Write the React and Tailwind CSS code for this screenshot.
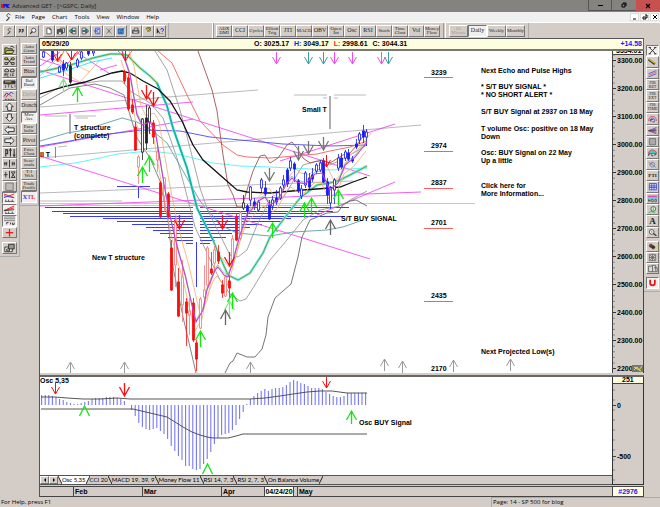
import clsx from "clsx";

const MENUS = ["File", "Page", "Chart", "Tools", "View", "Window", "Help"];

const STUDIES = ["ADX DMI", "CCI", "Cycles", "Elliott Trig", "JTI", "MACD", "OBV", "Open Int", "Osc", "RSI", "Stoch", "Time Clust", "Vol", "Money Flow"];

const OVERLAYS = [
    { lines: ["Auto", "Gann"] },
    { lines: ["Auto", "Trend"] },
    { lines: ["Bias"] },
    { lines: ["Bol", "Band"], on: true },
    { lines: ["Delta"], disabled: true },
    { lines: ["Donch"] },
    { lines: ["Mov", "Ave"], on: true },
    { lines: ["Para-", "bolic"] },
    { lines: ["Pivot"] },
    { lines: ["Price", "Clust"] },
    { lines: ["Seas-", "onals"] },
    { lines: ["T/J", "Web"] },
    { lines: ["Trade", "Profile"] },
];

const TABS = ["Osc 5,35", "CCI 20", "MACD 19, 39, 9", "Money Flow 11", "RSI 14, 7, 3", "RSI 2, 7, 3", "On Balance Volume"];

// Straight trend lines: x1, y1, x2, y2
const MAGENTA_LINES = [
    [40, 115, 193, 102],
    [40, 147, 193, 119],
    [40, 70, 370, 176],
    [40, 156, 370, 259],
    [280, 161, 395, 124],
    [40, 206, 421, 192],
    [317, 215, 395, 182],
    [100, 70, 117, 65],
    [76, 52, 110, 74],
    [40, 66, 60, 52],
    [40, 59, 62, 66],
];

const GRAY_LINES = [
    [40, 107, 258, 90],
    [40, 158, 421, 125],
    [40, 193, 353, 181],
    [45, 116, 67, 116],
    [74, 116, 96, 116],
    [76, 118, 88, 118],
    [58, 147, 67, 146],
    [294, 95, 327, 95],
    [334, 95, 366, 95],
    [323, 98, 327, 98],
    [334, 98, 338, 98],
    [40, 201, 122, 201],
];

// Volume-at-price bars: y, left edge, right edge
const VOLUME_BARS = [
    [207, 45, 349], [211, 52, 333], [213, 63, 322], [216, 70, 345], [218, 103, 291],
    [221, 117, 282], [224, 132, 262], [227, 146, 250], [230, 153, 240], [233, 160, 232],
    [237, 168, 226], [240, 175, 215], [243, 186, 210],
];

const CURVES = [
    { color: "#9a9a9a", points: "155,51 167,70 180,110 190,148 200,188 208,211 220,235 230,255 238,257 247,250 257,225 268,203 283,198 303,165 317,161 330,165 345,158 367,145" },
    { color: "#9a9a9a", points: "40,98 60,87 78,84 100,81 122,81 130,91 150,103 163,118 177,158 188,200 195,227 207,253 220,280 230,294 240,301 246,299 253,288 270,260 287,240 303,220 320,210 340,206 352,199 367,191" },
    { color: "#777777", points: "40,105 70,88 95,84 110,88 124,95 137,138 150,158 160,181 168,220 173,267 183,317 190,347 196,373" },
    { color: "#666666", points: "225,373 230,363 233,361 237,353 247,357 255,357 262,349 266,335 268,317 275,298 291,284 298,257 302,237 310,220 327,213 338,212 343,205 350,201 356,200 367,206" },
    { color: "#5f9ea0", points: "40,141 67,133 85,130 100,125 122,118 137,122 153,131 167,143 187,178 200,201 213,216 220,225 237,233 270,236 293,232 327,230 343,227 363,220" },
    { color: "#4d4de8", points: "40,146 70,141 100,135 143,130 180,131 210,137 240,140 283,144 330,146 367,145" },
    { color: "#55f0f5", points: "40,167 75,163 100,158 117,154 150,151 177,154 213,163 240,166 270,167 330,170 367,168" },
    { color: "#f26060", points: "158,51 172,63 187,95 200,121 223,145 237,155 247,157 270,158 283,157 317,154 330,151 350,147 367,141" },
    { color: "#a05252", points: "198,51 212,90 217,111 223,155 228,185 233,195 237,207 242,207 247,190 253,171 260,156 265,155 270,163 278,158 287,145 292,142 297,148 303,158 310,163 322,160 330,163 343,155 350,153 357,145 367,130" },
];

const ENVELOPE = "40,72 67,66 93,58 110,54 120,54 127,55 140,68 150,76 157,83 167,106 173,128 187,168 197,208 213,240 220,257 228,275 238,280 250,273 263,253 270,237 283,220 300,198 317,185 330,183 340,180 350,175 367,166";
const SLOW_AVERAGE = "40,94 67,86 85,82 100,77 112,73 122,71 130,73 143,81 158,89 170,101 182,121 193,145 203,160 220,175 237,190 247,192 270,193 303,190 330,188 340,187 353,182 367,177";

const FAST_AVERAGE = [
    [122, 51], [130, 75], [137, 115], [142, 125], [150, 122], [155, 130], [160, 160], [165, 190], [172, 225],
    [178, 250], [185, 275], [193, 310], [196, 322], [203, 310], [207, 290], [215, 270], [218, 267], [224, 275],
    [228, 277], [232, 265], [240, 235], [247, 215], [260, 200], [265, 197], [270, 205], [278, 200], [287, 183],
    [292, 178], [297, 182], [305, 184], [315, 174], [322, 173], [330, 190], [338, 183], [345, 165], [355, 157], [367, 142],
];

const shifted = (dx, dy) => FAST_AVERAGE.map(([x, y]) => `${x + dx},${y + dy}`).join(" ");

// x, top, bottom, wick top, wick bottom, colour, filled
const CANDLES = [
    [43, 52, 57, 51, 58, "b", 0], [52, 51, 60, 51, 62, "b", 1], [59, 67, 72, 66, 73, "b", 0], [63, 64, 70, 60, 76, "b", 1],
    [66, 63, 68, 62, 70, "b", 0], [70, 66, 82, 62, 84, "k", 1], [77, 60, 66, 58, 68, "b", 0], [81, 52, 58, 51, 60, "b", 0],
    [88, 51, 54, 51, 56, "b", 1], [93, 51, 53, 51, 56, "b", 0],
    [124, 72, 81, 70, 84, "r", 1], [128, 78, 109, 74, 111, "r", 1], [132, 105, 112, 99, 114, "r", 1], [135, 127, 150, 122, 151, "r", 1],
    [138, 157, 167, 155, 184, "p", 0], [142, 119, 152, 118, 160, "k", 0], [146, 118, 143, 105, 150, "k", 1], [149, 108, 122, 106, 134, "k", 0],
    [153, 123, 137, 120, 144, "r", 1], [157, 152, 160, 145, 172, "p", 0], [160, 183, 217, 181, 218, "r", 1], [164, 178, 196, 177, 212, "p", 0],
    [168, 194, 217, 192, 218, "r", 1], [171, 248, 290, 240, 291, "r", 1], [175, 220, 265, 217, 287, "p", 0], [178, 282, 316, 268, 317, "r", 1],
    [182, 277, 305, 260, 322, "p", 0], [186, 302, 313, 298, 346, "r", 1], [189, 311, 315, 298, 335, "p", 0], [193, 303, 340, 298, 342, "r", 1],
    [196, 343, 359, 340, 371, "r", 1], [200, 299, 328, 297, 329, "p", 0], [204, 290, 297, 265, 305, "p", 0], [207, 248, 285, 246, 288, "p", 0],
    [211, 269, 273, 252, 275, "r", 1], [214, 250, 263, 246, 270, "p", 0], [218, 252, 261, 245, 264, "r", 1], [222, 285, 293, 280, 298, "r", 1],
    [225, 277, 296, 275, 297, "p", 0], [229, 281, 288, 276, 298, "r", 1], [232, 239, 262, 235, 266, "p", 0], [236, 217, 240, 213, 241, "r", 1],
    [240, 213, 238, 211, 240, "p", 0], [243, 203, 208, 195, 210, "k", 0], [247, 206, 211, 204, 217, "b", 1], [250, 187, 200, 186, 206, "b", 0],
    [254, 202, 206, 198, 210, "b", 1], [258, 202, 210, 200, 212, "b", 0], [261, 180, 188, 178, 192, "b", 0], [265, 188, 194, 181, 196, "b", 1],
    [269, 205, 219, 200, 220, "b", 1], [272, 200, 206, 196, 210, "b", 0], [276, 198, 202, 190, 205, "b", 1], [280, 188, 198, 186, 200, "b", 0],
    [283, 180, 185, 175, 188, "b", 0], [287, 170, 184, 168, 187, "b", 1], [290, 161, 168, 157, 171, "b", 0], [294, 164, 169, 162, 182, "b", 1],
    [298, 181, 191, 179, 193, "b", 1], [301, 189, 196, 185, 199, "b", 0], [305, 173, 185, 171, 188, "b", 0], [309, 178, 187, 173, 189, "b", 1],
    [312, 175, 179, 168, 182, "b", 1], [316, 165, 171, 163, 174, "b", 0], [320, 163, 170, 160, 172, "b", 0], [323, 161, 182, 158, 183, "b", 1],
    [327, 182, 195, 178, 204, "b", 1], [330, 188, 203, 186, 209, "b", 0], [334, 180, 190, 178, 204, "b", 0], [338, 158, 168, 154, 171, "b", 0],
    [341, 158, 167, 153, 169, "b", 1], [345, 152, 158, 150, 161, "b", 0], [348, 153, 159, 149, 161, "b", 1], [352, 159, 161, 156, 163, "b", 1],
    [356, 144, 147, 139, 149, "b", 1], [359, 134, 140, 132, 144, "b", 0], [363, 131, 137, 125, 143, "b", 1], [366, 132, 137, 129, 146, "b", 0],
];

const CANDLE_COLORS = { b: "#1a1af0", k: "#222222", r: "#fb0d0d", p: "#f47878" };

// x, tip y, direction (1 points down), colour, shaft length
const ARROWS = [
    [276, 64, 1, "#f04af0", 12], [308, 64, 1, "#3d9c9c", 12], [323, 64, 1, "#3d9c9c", 12], [334, 64, 1, "#f04af0", 12],
    [352, 64, 1, "#f04af0", 12], [381, 64, 1, "#f04af0", 12], [388, 64, 1, "#3d9c9c", 12],
    [57, 61, 1, "#fb0d0d", 12], [71, 60, 1, "#fb0d0d", 12], [125, 61, 1, "#fb0d0d", 12],
    [146, 99, 1, "#fb0d0d", 14], [153, 106, 1, "#fb0d0d", 14], [179, 229, 1, "#fb0d0d", 14], [222, 229, 1, "#fb0d0d", 14],
    [229, 266, 1, "#fb0d0d", 14], [326, 167, 1, "#fb0d0d", 12],
    [269, 181, 1, "#777777", 13], [298, 160, 1, "#777777", 14], [308, 154, 1, "#777777", 13], [323, 150, 1, "#777777", 13],
    [63, 79, -1, "#8adf8a", 13], [77, 87, -1, "#10e810", 15], [142, 167, -1, "#10e810", 16], [149, 156, -1, "#10e810", 16],
    [200, 331, -1, "#10e810", 16], [229, 301, -1, "#7ef07e", 16], [232, 293, -1, "#10e810", 16], [272, 223, -1, "#10e810", 15],
    [304, 203, -1, "#10e810", 15], [311, 198, -1, "#10e810", 15], [338, 190, -1, "#10e810", 15],
    [225, 310, -1, "#666666", 15], [330, 220, -1, "#666666", 15],
    [70, 362, -1, "#999999", 11], [124, 362, -1, "#999999", 11], [250, 362, -1, "#999999", 11], [384, 359, -1, "#999999", 12],
    [402, 361, -1, "#999999", 12], [453, 360, -1, "#999999", 12], [510, 359, -1, "#999999", 12],
];

const LEVELS = [[3239, 75, 77], [2974, 148, 151], [2837, 185, 188], [2701, 225, 228], [2435, 298, 301], [2170, 371, 374]];

const NOTES = [
    [481, 73, "Next Echo and Pulse Highs"],
    [481, 89, "* S/T BUY SIGNAL *"],
    [481, 97, "* NO SHORT ALERT *"],
    [481, 114, "S/T BUY Signal at 2937 on 18 May"],
    [481, 131, "T volume Osc: positive on 18 May"],
    [481, 139, "Down"],
    [481, 155, "Osc: BUY Signal on 22 May"],
    [481, 163, "Up a little"],
    [481, 188, "Click here for"],
    [481, 196, "More Information..."],
    [481, 354, "Next Projected Low(s)"],
    [74, 130, "T structure"],
    [74, 138, "(complete)"],
    [40, 157, "ll T"],
    [302, 112, "Small T"],
    [341, 221, "S/T BUY SIGNAL"],
    [92, 260, "New T structure"],
];

const OSC = [
    10, 10, 10, 9, 8, 6, 5, 3, 2, 1, 1, 2, 3, 4, 6, 7, 7, 7, 8, 8, 8, 7, 6, 4, 0, -5, -11, -18, -22, -24, -25, -24, -23, -26, -29,
    -34, -41, -46, -51, -55, -61, -61, -64, -65, -64, -59, -54, -47, -39, -33, -30, -29, -28, -25, -20, -14, -7, 1, 6, 9, 12, 14,
    16, 14, 16, 17, 17, 18, 20, 23, 25, 24, 22, 21, 19, 17, 17, 17, 16, 13, 11, 9, 8, 8, 9, 12, 12, 12, 12, 12, 12,
];

const OSC_ARROWS = [
    [55, 394, 1, "#fb0d0d", 12], [124, 396, 1, "#fb0d0d", 13], [326, 388, 1, "#fb0d0d", 12],
    [84, 406, -1, "#10e810", 0], [207, 464, -1, "#10e810", 0], [351, 411, -1, "#10e810", 13],
];

function Arrow({ x, y, dir, color, len }) {
    const back = y - dir * (len === 0 ? 10 : len > 12 ? 9 : 7);
    const wing = len > 12 || len === 0 ? 5 : 4;
    return (
        <path
            d={`M${x - wing} ${back}L${x} ${y}L${x + wing} ${back}M${x} ${y}V${y - dir * len}`}
            stroke={color}
            strokeWidth={len > 12 || len === 0 ? 1.3 : 1}
            fill="none"
        />
    );
}

function PricePlot() {
    return (
        <svg viewBox="40 51 572 322" className="block h-auto min-w-0 flex-1 bg-white font-['Liberation_Sans',sans-serif] text-[7px] font-bold">
            <path d="M40 203.500H475M40 205.500H330" stroke="#c8c8c8" />
            {GRAY_LINES.map((l, i) => (
                <line key={i} x1={l[0]} y1={l[1]} x2={l[2]} y2={l[3]} stroke="#a8a8a8" strokeWidth="0.8" />
            ))}
            {VOLUME_BARS.map(([y, a, b]) => (
                <path key={y} d={`M${a} ${y + 0.5}H193M200 ${y + 0.5}H${b}`} stroke="#3a3aee" />
            ))}
            <path d="M117 186.500H150M138.500 187V198M196.500 242V287" stroke="#3a3aee" />
            {MAGENTA_LINES.map((l, i) => (
                <line key={i} x1={l[0]} y1={l[1]} x2={l[2]} y2={l[3]} stroke="#f24cf2" strokeWidth="0.9" />
            ))}
            {CURVES.map((c, i) => (
                <polyline key={i} points={c.points} stroke={c.color} strokeWidth="0.9" fill="none" />
            ))}
            <path d="M44 51L58 62L64 51M66 51L72 60L80 51M52 51L66 66L78 51M118 51L126 58L132 51" stroke="#f54040" fill="none" strokeWidth="0.8" />
            <path d="M40 76L58 58L66 74L80 82L100 60M78 66L90 72" stroke="#f5b070" fill="none" strokeWidth="0.8" />
            <path d="M40 78L68 70L92 62L112 58" stroke="#45e6ee" fill="none" />
            <polyline points={ENVELOPE} stroke="#6cf0ee" strokeWidth="2.6" fill="none" />
            <polyline points={ENVELOPE} stroke="#7a9a2a" strokeWidth="1" fill="none" />
            <path d="M157 83L167 106L173 128L187 168L197 208L213 240" stroke="#18b0a8" strokeWidth="1.5" fill="none" />
            <polyline points={SLOW_AVERAGE} stroke="#111111" strokeWidth="1.3" fill="none" />
            <polyline points={shifted(4, -9)} stroke="#f5ac6c" strokeWidth="0.8" fill="none" />
            <polyline points={shifted(-1, 9)} stroke="#f5ac6c" strokeWidth="0.8" fill="none" />
            <polyline points={shifted(0, -2)} stroke="#7bd07b" strokeWidth="0.8" fill="none" />
            {CANDLES.map(([x, top, bottom, hi, lo, c, filled]) => (
                <g key={x} stroke={CANDLE_COLORS[c]} strokeWidth="0.8">
                    <line x1={x + 0.5} x2={x + 0.5} y1={hi} y2={lo} />
                    <rect
                        x={x - 0.5}
                        y={top}
                        width={2}
                        height={bottom - top}
                        fill={filled ? CANDLE_COLORS[c] : "#ffffff"}
                    />
                </g>
            ))}
            <polyline points={shifted(0, 0)} stroke="#c33fd6" strokeWidth="1.1" fill="none" />
            {ARROWS.map(([x, y, dir, color, len], i) => (
                <Arrow key={i} x={x + 0.5} y={y} dir={dir} color={color} len={len} />
            ))}
            <path d="M70 114V134M330 96V129" stroke="#999999" strokeWidth="1.6" />
            <path d="M55.500 147V158" stroke="#888888" />
            {LEVELS.map(([price, y, rule]) => (
                <g key={price}>
                    <text x="431" y={y}>{price}</text>
                    <line x1="424" x2="453" y1={rule + 0.5} y2={rule + 0.5} stroke="#f56060" />
                </g>
            ))}
            {NOTES.map(([x, y, text]) => (
                <text key={text} x={x} y={y}>{text}</text>
            ))}
        </svg>
    );
}

function PriceScale() {
    const labels = Array.from({ length: 12 }, (_, i) => 3300 - i * 100);
    const ticks = Array.from({ length: 57 }, (_, i) => 55 + i * 5.6);
    return (
        <svg viewBox="613 51 30 322" className="block w-[32px] shrink-0 border-x border-[#444] bg-[#d4cdc7] font-['Liberation_Sans',sans-serif] text-[7px] font-bold">
            <rect x="613" y="51" width="30" height="3" fill="#fdfbe0" />
            <text x="616" y="53">3354.01</text>
            <path d="M613 54.500H643" stroke="#444444" />
            {ticks.map((y) => (
                <line key={y} x1="613" x2="615" y1={y} y2={y} stroke="#666666" strokeWidth="0.7" />
            ))}
            {labels.map((n, i) => (
                <g key={n}>
                    <line x1="613" x2="616" y1={60.5 + i * 28} y2={60.5 + i * 28} stroke="#333333" />
                    <text x="617" y={63 + i * 28}>{n}.00</text>
                </g>
            ))}
            <rect x="632" y="365" width="11" height="7" fill="#77776a" />
            <path d="M634 370L637 367L639 370L642 366M634 367L641 371" stroke="#e6e04a" fill="none" />
        </svg>
    );
}

function OscPlot() {
    return (
        <svg viewBox="40 377 572 98" className="block h-auto w-full bg-white font-['Liberation_Sans',sans-serif] text-[7px] font-bold">
            <text x="40" y="383">Osc 5,35</text>
            {OSC.map((v, i) => (
                <line key={i} x1={41.6 + i * 3.6} x2={41.6 + i * 3.6} y1="405" y2={405 - v} stroke="#7777f5" strokeWidth="1.1" />
            ))}
            <polyline points="41,397 55,397 67,398 83,399 100,399 117,398 130,399 250,399 265,398 280,396 293,394 307,392 320,391 332,391 347,393 367,393" stroke="#444444" strokeWidth="0.9" fill="none" />
            <polyline points="41,409 133,409 150,413 167,417 183,427 192,432 200,435 207,437 213,438 228,438 236,436 243,434 367,434" stroke="#444444" strokeWidth="0.9" fill="none" />
            {OSC_ARROWS.map(([x, y, dir, color, len], i) => (
                <Arrow key={i} x={x + 0.5} y={y} dir={dir} color={color} len={len} />
            ))}
            <text x="359" y="425">Osc BUY Signal</text>
        </svg>
    );
}

function OscScale() {
    const ticks = Array.from({ length: 10 }, (_, i) => 390 + i * 10);
    return (
        <svg viewBox="613 377 30 107" className="block w-[32px] shrink-0 border-x border-b border-[#333] bg-[#d4cdc7] font-['Liberation_Sans',sans-serif] text-[7px] font-bold">
            <rect x="613" y="377" width="30" height="6" fill="#fdfbe0" />
            <text x="622" y="382">251</text>
            <path d="M613 383.500H643M613 405.500H616M613 456.500H616" stroke="#444444" />
            {ticks.map((y) => (
                <line key={y} x1="613" x2="615" y1={y} y2={y} stroke="#666666" strokeWidth="0.7" />
            ))}
            <text x="617" y="408">0</text>
            <text x="617" y="459">-500</text>
        </svg>
    );
}

// Glyphs share a 14 x 10 drawing area
const GLYPHS = {
    squiggle: <path d="M8 1C5 2 5 4 7 5S8 8 5 9M8 1L10 3M5 9L8 7M9 5L7 7" />,
    quotes: <path d="M4 3h2v2L4 7M8 3h2v2L8 7" strokeWidth="1.6" />,
    lens: <g><circle cx="8" cy="4" r="3" fill="#eef" /><path d="M6 6L3 9" strokeWidth="1.6" /></g>,
    page: <path d="M4 1h4l2 2v6H4zM8 1v2h2" fill="#fff" />,
    save: <g><path d="M2 3h7v6H2z" fill="#555" /><path d="M6 1h6v6H9V3H6z" fill="#ddd" /><path d="M4 7h3v2H4z" fill="#fff" stroke="none" /></g>,
    pageLeft: <g><path d="M6 1h5v8H6z" fill="#fff" /><path d="M2 5l3-3v2h5v2H5v2z" fill="#19c5cc" /></g>,
    pageRight: <g><path d="M3 1h5v8H3z" fill="#fff" /><path d="M12 5L9 2v2H4v2h5v2z" fill="#19c5cc" /></g>,
    pageBlue: <g stroke="#3344dd"><path d="M5 1h6v8H5z" fill="#cde" /><path d="M3 4h5M3 6h5M7 3h3M7 8h3" /></g>,
    cross: <path d="M3 1L11 9M11 1L3 9M5 5h4M7 2v6" stroke="#777" />,
    pageTeal: <g><path d="M3 2h7v7H3z" fill="#2aa8b8" stroke="#2233aa" /><path d="M6 5L12 1M5 7h3" stroke="#2233dd" /></g>,
    printer: <g><path d="M4 4L5 1h5l-1 3" fill="#fff" /><path d="M2 4h9v4H2z" fill="#888" /><path d="M4 7h5" stroke="#fff" /></g>,
    help: <g><path d="M5 3C5 0 10 0 10 3C10 5 7 4 7 6" stroke="#333" strokeWidth="2.400" /><path d="M5 3C5 0 10 0 10 3C10 5 7 4 7 6M7 8v1" stroke="#eadf00" strokeWidth="1.300" /></g>,
    whatsThis: <g><path d="M3 1v7l2-2 2 3" fill="#111" /><path d="M8 3C8 1 12 1 12 3S10 5 10 6M10 8v1" stroke="#2222cc" strokeWidth="1.400" /></g>,
    folder: <g><path d="M2 3h3l1 1h4v5H2z" fill="#a9a92c" /><path d="M4 6h8l-2 3H2z" fill="#e4df5a" /><path d="M8 2l2-1 2 2" /></g>,
    network: <g><path d="M2 2h3v2H2zM9 2h3v2H9zM2 7h3v2H2zM9 7h3v2H9z" fill="#e4df5a" /><path d="M5 3l4 5M9 3L5 8" /></g>,
    reset: <g><path d="M2 2l2-1 2 1v2H2zM8 2l2-1 2 1v2H8z" /><path d="M2 9V6h2v1H2l2 2M6 6H5v3h1M8 6v3M10 9V6h2M10 8h2" strokeWidth="0.7" /></g>,
    study: <g><path d="M1 2h12v3H1z" fill="#333" /><path d="M2 3h7" stroke="#e4df5a" /><path d="M2 7h1v2H2M5 6h2M6 6v3M9 6v3h2M13 6v3" strokeWidth="0.7" /></g>,
    elliott: <g><path d="M1 6l3-4 2 2 3-3 2 2" stroke="#2233ee" /><path d="M3 7l3-4 3 3" stroke="#ee2222" /><path d="M2 9h10" strokeDasharray="2 1" /></g>,
    up: <path d="M7 1L11 5H9V9H5V5H3z" fill="#eee" />,
    down: <path d="M7 9L11 5H9V1H5V5H3z" fill="#eee" />,
    left: <path d="M2 5L6 1V3H12V7H6V9z" fill="#eee" />,
    right: <path d="M12 5L8 1V3H2V7H8V9z" fill="#eee" />,
    barsIn: <path d="M3 1v8M3 2h2v4H3M8 1v8M12 1v8M7 3l1-2 1 2M11 7l1 2 1-2" strokeWidth="1.200" />,
    barsOut: <path d="M7 1v8M1 5h3M2 3v4M4 3v4M10 3v4M12 3v4M10 5h3" />,
    barsFit: <path d="M7 1v8M3 2v6M1 5h4M9 2h4L9 8h4z" />,
    box: <path d="M3 1h8v8H3z" fill="#bbb" stroke="#777" />,
    lines: <g><path d="M1 1l11 4M1 5L12 1" stroke="#ee2222" /><path d="M1 3l11 2" stroke="#4444ee" /><path d="M2 9h10M3 7v2M6 7v2M10 7v2" strokeWidth="0.8" /></g>,
    gann: <g><path d="M1 6L12 1M1 6L12 3" stroke="#ee2222" /><path d="M1 6L12 5" stroke="#333" /><path d="M2 9h10M3 7v2M6 7v2M10 7v2" strokeWidth="0.8" /></g>,
    fib: <g><path d="M1 1h12M1 3h12M1 5h12" stroke="#777" /><path d="M4 9V7h2M8 7v2M10 7v2h2v-2" /></g>,
    plus: <path d="M7 1v8M3 5h8" stroke="#f01818" strokeWidth="1.300" />,
    props: <g><path d="M2 4h8v5H2z" fill="#fff" /><path d="M6 1h6v5H6z" fill="#9a9a88" /><path d="M4 6h3v2H4z" /></g>,
    scaleX: <path d="M3 1L11 9M11 1L3 9M2 1h3M9 1h3M2 9h3M9 9h3" strokeWidth="1.200" />,
    pencil: <g><path d="M2 2L10 8" stroke="#333" strokeWidth="3" /><path d="M3 2L10 7" stroke="#d9ce20" strokeWidth="1.700" /></g>,
    channel: <g><path d="M2 5L12 1M2 9L12 5" stroke="#4444ee" /><path d="M2 7L12 3" stroke="#ee5555" /></g>,
    arcs: <g><path d="M2 8C2 0 12 0 12 8" stroke="#ee3355" /><path d="M4 8C4 3 10 3 10 8" stroke="#4444ee" /><path d="M5 9V6h3M7 9h3" /></g>,
    fan: <g><path d="M12 1L2 5L12 9" stroke="#4444ee" /><path d="M12 3L2 5L12 7" stroke="#ee3366" strokeWidth="1.400" /><path d="M2 5h10" /></g>,
    square: <path d="M3 1h8v8H3z" fill="#aaa" stroke="#666" />,
    ellipse: <g><path d="M2 6C2 0 12 0 12 6z" fill="#32d4d8" stroke="#dd3333" /><path d="M2 9V7h2M6 7v2h2M10 9V7h2" /></g>,
    search2: <g><path d="M2 2l8 5M3 5l5-3" stroke="#777" /><circle cx="7" cy="5" r="3" stroke="#7777cc" /><path d="M9 7l3 2" stroke="#55aa99" /></g>,
    gridBlue: <path d="M3 1h9v8H3zM3 4h9M3 6h9M6 1v8M9 1v8" stroke="#3344ee" fill="#dde" />,
    mob: <g><path d="M1 1h12v2H1z" fill="#ee44cc" stroke="none" /><path d="M1 3h12v2H1z" fill="#30d8dc" stroke="none" /><path d="M2 9V6l1 2 1-2v3M6 6h2v3H6zM10 6v3h2V6z" strokeWidth="0.8" /></g>,
    loopGreen: <g><circle cx="8" cy="4" r="3" stroke="#444" fill="#dfd" /><path d="M8 2v4M2 9c2-2 5-2 8 0" stroke="#22aa33" /></g>,
    zoom: <g><circle cx="6" cy="4" r="3" fill="#fff" /><path d="M8 6l4 3" strokeWidth="1.500" /><path d="M5 4h2" /></g>,
    palette: <g><circle cx="5" cy="4" r="2" fill="#c22" /><circle cx="8" cy="6" r="2" fill="#333" /><circle cx="11" cy="8" r="1" fill="#eadf00" stroke="#eadf00" /></g>,
    tiles: <path d="M3 1h8v8H3zM4 2l6 6M10 2L4 8M7 1v8M3 5h8" stroke="#666" />,
    copies: <path d="M2 2h5v7H2zM6 1h5v7M9 4h4v5H7" stroke="#555" fill="#ddd" />,
    magnet: <path d="M4 1v4C4 9 10 9 10 5V1" stroke="#e81414" strokeWidth="2.200" />,
};

function Glyph({ name }) {
    return (
        <svg viewBox="0 0 14 10" className="h-full max-h-[10px] w-full" fill="none" stroke="#333333" strokeWidth="1">
            {GLYPHS[name]}
        </svg>
    );
}

const TEXT_SIZES = {
    tiny: "text-[4px] leading-[4px]",
    small: "text-[5px] leading-[4px]",
    normal: "text-[6px] leading-[5px]",
    large: "text-[9px] leading-[9px] font-bold",
};

function ToolButton({ label, on, disabled, size = "normal", className, children }) {
    return (
        <button
            type="button"
            aria-label={label}
            disabled={disabled}
            className={clsx(
                "flex items-center justify-center border font-['Liberation_Serif',serif] text-[#222] disabled:text-[#a39d98]",
                TEXT_SIZES[size],
                on ? "border-t-[#777] border-r-white border-b-white border-l-[#777] bg-[#f1efed]" : "border-t-white border-r-[#777] border-b-[#777] border-l-white bg-[#d4cdc7]",
                className
            )}
        >
            {children}
        </button>
    );
}

function IconGroup({ names }) {
    return (
        <div className="flex">
            {names.map((n) => (
                <ToolButton key={n} label={n} className="h-[12px] w-[12px]">
                    <Glyph name={n} />
                </ToolButton>
            ))}
        </div>
    );
}

function TitleBar() {
    return (
        <header className="flex h-[12px] items-stretch bg-[#858380] text-[6px] leading-[12px] text-[#1c1c1c]">
            <svg viewBox="0 0 10 10" className="mt-px ml-px h-[10px] w-[10px]">
                <path d="M0 3H4V7H0z" fill="#e01818" />
                <path d="M2 3H9L7 5L9 7H6L4 5L3 7z" fill="#1c1cd8" />
            </svg>
            <h1 className="ml-px flex-1">Advanced GET - [^GSPC, Daily]</h1>
            <button type="button" aria-label="Minimize" className="flex h-[11px] w-[24px] items-center justify-center border border-t-0 border-[#555]">
                <span className="mt-px h-px w-[5px] bg-black"></span>
            </button>
            <button type="button" aria-label="Restore" className="flex h-[11px] w-[24px] items-center justify-center border-b border-[#555]">
                <svg viewBox="0 0 6 6" className="h-[6px] w-[6px]" fill="none" stroke="#000"><path d="M1 2h3v3H1zM2 1h3v3" /></svg>
            </button>
            <button type="button" aria-label="Close" className="flex h-[11px] w-[24px] items-center justify-center bg-[#c7514e]">
                <svg viewBox="0 0 6 6" className="h-[6px] w-[6px]" stroke="#000"><path d="M1 1L5 5M5 1L1 5" strokeWidth="1.200" /></svg>
            </button>
        </header>
    );
}

function MenuBar() {
    return (
        <nav className="flex h-[10px] items-center bg-[#f0f0f0] text-[6px] leading-[10px]">
            <div className="mr-[1px] ml-[2px] h-[10px] w-[12px]">
                <Glyph name="squiggle" />
            </div>
            <div className="flex flex-1 gap-[7px]">
                {MENUS.map((m) => (
                    <button key={m} type="button">{m}</button>
                ))}
            </div>
            <div className="flex gap-px pr-px">
                {["M1 5h3", "M1 3h3v2H1zM3 1h2v3", "M1 1L5 5M5 1L1 5"].map((d, i) => (
                    <button key={d} type="button" aria-label={["Minimize chart", "Restore chart", "Close chart"][i]} className="flex h-[8px] w-[9px] items-center justify-center border border-[#ddd] bg-white">
                        <svg viewBox="0 0 6 6" className="h-[6px] w-[6px]" fill="none" stroke="#000"><path d={d} /></svg>
                    </button>
                ))}
            </div>
        </nav>
    );
}

function TopToolbar() {
    return (
        <div className="flex h-[16px] items-center border-t border-white pl-[3px]">
            <IconGroup names={["squiggle", "quotes", "lens"]} />
            <div className="ml-[4px]">
                <IconGroup names={["page", "save", "pageLeft", "pageRight", "pageBlue", "cross", "pageTeal"]} />
            </div>
            <div className="ml-[3px]">
                <IconGroup names={["printer", "help", "whatsThis"]} />
            </div>
            <div className="ml-[2px] h-full w-[44px] border-l border-[#aaa]"></div>
            <div className="mr-[2px] h-full w-[2px] border-x border-white border-r-[#999]"></div>
            <div className="flex">
                {STUDIES.map((s) => (
                    <ToolButton key={s} size={s.length > 3 ? "small" : "normal"} className="h-[12px] w-[16px]">
                        {s}
                    </ToolButton>
                ))}
            </div>
            <div className="mx-[3px] h-full w-[3px] border-x border-white border-l-[#999]"></div>
            <div className="flex">
                <ToolButton disabled size="small" className="h-[12px] w-[19px]">60 Minute</ToolButton>
                <ToolButton on className="h-[12px] w-[19px]">Daily</ToolButton>
                <ToolButton size="small" className="h-[12px] w-[19px]">Weekly</ToolButton>
                <ToolButton size="small" className="h-[12px] w-[19px]">Monthly</ToolButton>
            </div>
            <div className="ml-[3px] h-full border-l border-[#aaa]"></div>
        </div>
    );
}

function LeftToolbars() {
    const tools = ["folder", "network", "reset", "study", "elliott", "up", "down", "left", "right", "barsIn", "barsOut", "barsFit", "box", "lines", "gann", "fib", "plus"];
    return (
        <aside className="flex w-[39px] shrink-0 items-start">
            <div className="w-[20px] border-r border-b border-[#aaa] px-[2px] pt-[6px] pb-[2px]">
                <div className="flex h-[194px] flex-col">
                    {tools.map((t) => (
                        <ToolButton key={t} label={t} on={["lines", "gann", "fib"].includes(t)} className="min-h-0 w-full flex-1">
                            <Glyph name={t} />
                        </ToolButton>
                    ))}
                </div>
                <ToolButton label="props" className="mt-[4px] h-[12px] w-full">
                    <Glyph name="props" />
                </ToolButton>
            </div>
            <div className="w-[19px] border-r border-b border-[#aaa] px-px pt-[5px] pb-[2px]">
                <div className="flex h-[160px] flex-col">
                    {OVERLAYS.map(({ lines, on, disabled }) => (
                        <ToolButton key={lines.join("")} on={on} disabled={disabled} size={lines.length > 1 ? "small" : "normal"} className="min-h-0 w-full flex-1 flex-col">
                            {lines.map((l) => <span key={l}>{l}</span>)}
                        </ToolButton>
                    ))}
                    <ToolButton on className="min-h-0 w-full flex-1 font-bold">
                        <span className="text-[#2222ee]">X</span>
                        <span className="text-[#dd22dd]">T</span>
                        <span className="text-[#ee2222]">L</span>
                    </ToolButton>
                </div>
            </div>
        </aside>
    );
}

const RIGHT_SIZES = { "FIB RET": "tiny", "FIB EXT": "tiny", "FIB TIME": "tiny", PTI: "small", A: "large" };

function RightToolbar() {
    const tools = ["scaleX", "pencil", "channel", "FIB RET", "FIB EXT", "FIB TIME", "arcs", "fan", "square", "ellipse", "search2", "PTI", "gridBlue", "mob", "loopGreen", "A", "zoom"];
    return (
        <aside className="w-[16px] shrink-0">
            <div className="border-b border-[#aaa] pt-[7px] pr-px pb-[2px] pl-[2px]">
                <div className="flex h-[193px] flex-col">
                    {tools.map((t) => (
                        <ToolButton key={t} label={t} on={t === "scaleX"} size={RIGHT_SIZES[t]} className={clsx("min-h-0 w-full flex-1", t === "PTI" && "font-bold")}>
                            {GLYPHS[t] ? <Glyph name={t} /> : t}
                        </ToolButton>
                    ))}
                </div>
                <div className="mt-[3px] flex flex-col">
                    {["palette", "tiles", "copies"].map((t) => (
                        <ToolButton key={t} label={t} className="h-[11px] w-full">
                            <Glyph name={t} />
                        </ToolButton>
                    ))}
                </div>
                <ToolButton label="magnet" on className="mt-[3px] h-[12px] w-full">
                    <Glyph name="magnet" />
                </ToolButton>
            </div>
        </aside>
    );
}

function QuoteBar() {
    return (
        <div className="flex h-[10px] items-center border-r border-[#666] bg-[#fdfde0] pr-px pl-[2px] text-[7px] leading-[10px] font-bold">
            <span className="w-[212px]">05/29/20</span>
            <div className="flex flex-1 gap-[5px]">
                <span>O: 3025.17</span>
                <span><span className="text-[#2020ee]">H:</span> 3049.17</span>
                <span><span className="text-[#ee2020]">L:</span> 2998.61</span>
                <span>C: 3044.31</span>
            </div>
            <span className="text-[#2020ee]">+14.58</span>
        </div>
    );
}

function StudyTabs() {
    return (
        <div role="tablist" className="flex h-[10px] items-stretch border-y border-[#555] font-['Lato',sans-serif] text-[6px] leading-[8px]">
            <ToolButton label="Previous" className="w-[9px]">
                <svg viewBox="0 0 4 4" className="h-[4px] w-[4px]"><path d="M3 0V4L1 2z" /></svg>
            </ToolButton>
            <ToolButton label="Next" className="w-[9px]">
                <svg viewBox="0 0 4 4" className="h-[4px] w-[4px]"><path d="M1 0V4L3 2z" /></svg>
            </ToolButton>
            {TABS.map((t, i) => (
                <div key={t} className="flex">
                    <svg viewBox="0 0 4 8" className="h-[8px] w-[4px]">
                        {i < 2 && <path d={i === 0 ? "M0 0H4V8z" : "M0 0H4L0 8z"} fill="#fff" />}
                        <path d={i === 1 ? "M4 0L0 8" : "M0 0L4 8"} stroke="#222" />
                    </svg>
                    <button type="button" role="tab" aria-selected={i === 0} className={clsx("whitespace-nowrap", i === 0 && "bg-white")}>{t}</button>
                </div>
            ))}
            <svg viewBox="0 0 4 8" className="h-[8px] w-[4px]"><path d="M4 0L0 8" stroke="#222" /></svg>
        </div>
    );
}

function DateStrip() {
    return (
        <div className="mt-px flex h-[11px] text-[7px] leading-[9px] font-bold">
            <div className="flex min-w-0 flex-1 border-y border-[#444] pl-[33px]">
                <span className="w-[69px] border-l border-[#444] pl-px">Feb</span>
                <span className="w-[79px] border-l border-[#444] pl-px">Mar</span>
                <span className="w-[43px] border-l border-[#444] pl-px">Apr</span>
                <time className="w-[30px] border-x border-[#444] bg-[#fdfde0] text-center">04/24/20</time>
                <span className="ml-[3px] border-l border-[#444] pl-px">May</span>
            </div>
            <span className="w-[32px] border border-[#444] bg-[#fdfde0] text-center text-[#2020ee]">#2976</span>
        </div>
    );
}

export default function App() {
    return (
        <div className="flex min-h-screen flex-col bg-[#d4cdc7] font-['Open_Sans',sans-serif] text-black">
            <TitleBar />
            <MenuBar />
            <TopToolbar />
            <div className="flex flex-1">
                <LeftToolbars />
                <main className="min-w-0 flex-1 border-t border-l border-[#555] font-['Liberation_Sans',sans-serif]">
                    <QuoteBar />
                    <section className="flex border-t-2 border-[#777770]">
                        <PricePlot />
                        <PriceScale />
                    </section>
                    <section className="mt-[2px] flex border-t-2 border-[#666]">
                        <div className="min-w-0 flex-1">
                            <OscPlot />
                            <StudyTabs />
                        </div>
                        <OscScale />
                    </section>
                    <DateStrip />
                </main>
                <RightToolbar />
            </div>
            <footer className="flex h-[10px] items-center text-[6px] leading-[10px]">
                <span className="flex-1 pl-px">For Help, press F1</span>
                <span className="w-[169px] border-t border-l border-[#aaa] pl-px leading-[9px]">Page: 14 - SP 500 for blog</span>
            </footer>
        </div>
    );
}
